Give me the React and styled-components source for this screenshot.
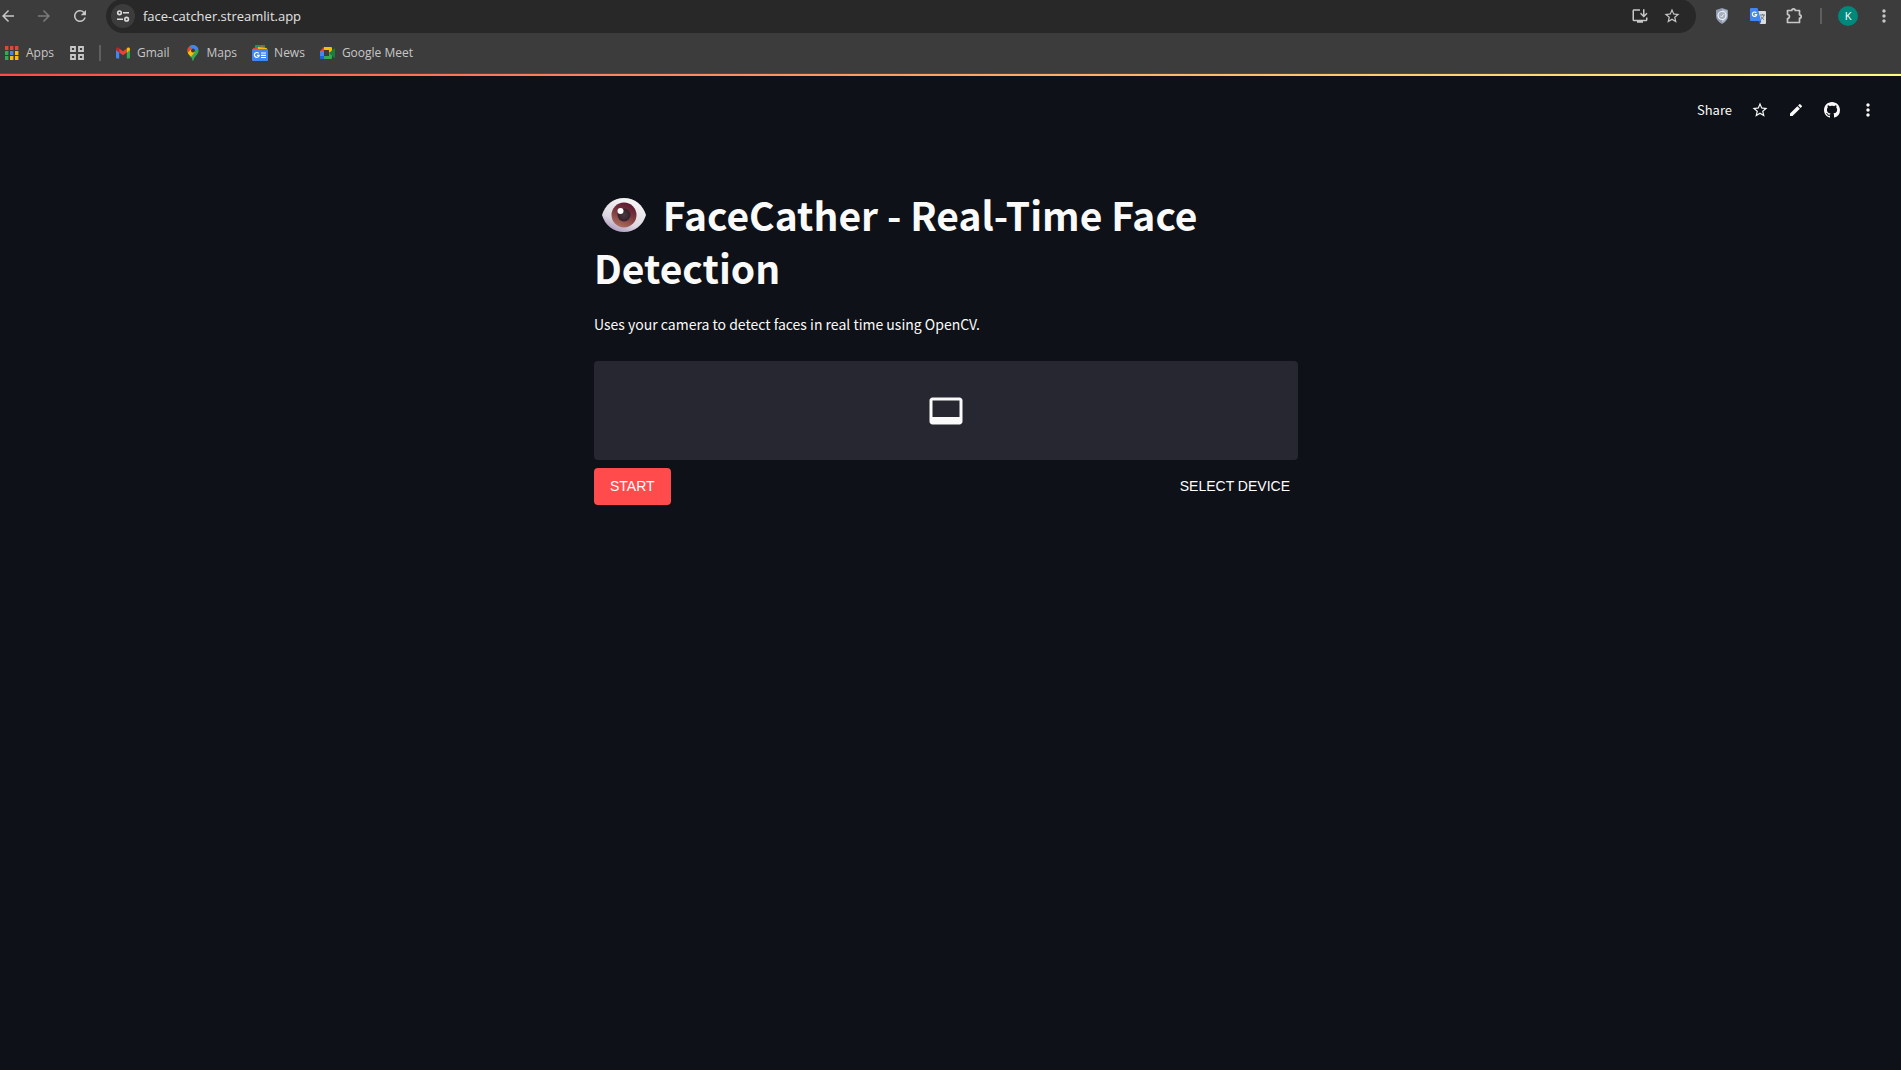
import React from "react";
import styled, { createGlobalStyle } from "styled-components";
import { MdArrowBack, MdArrowForward, MdEdit, MdInstallDesktop, MdMoreVert, MdRefresh, MdStarBorder } from "react-icons/md";

const chromeFont = `"Open Sans", "Noto Sans", sans-serif`;
const appFont = `"Noto Sans CJK JP", "Noto Sans", sans-serif`;
const controlFont = `"Liberation Sans", Arial, sans-serif`;

const GlobalStyle = createGlobalStyle`
  *, *::before, *::after { box-sizing: border-box; }
  body { margin: 0; background: #0e1117; }
  button, input { font: inherit; color: inherit; border: 0; padding: 0; margin: 0; background: none; }
  button { cursor: pointer; }
  svg { display: block; flex: none; }
`;

const Page = styled.div`
  min-height: 100vh;
  display: flex;
  flex-direction: column;
`;

/* Browser frame */

const BrowserBar = styled.div`
  background: #3c3c3c;
  color: #c7c7c7;
  font-family: ${chromeFont};
  border-bottom: 1px solid #4a4a4a;
`;

const Toolbar = styled.div`
  display: flex;
  align-items: center;
  gap: 18px;
  height: 32px;
  padding-right: 9px;
`;

const IconRow = styled.div`
  display: flex;
  align-items: center;
  gap: ${(p) => p.$gap}px;
`;

const IconButton = styled.button`
  width: 16px;
  height: 16px;
  display: flex;
  align-items: center;
  justify-content: center;
  flex: none;
  color: ${(p) => p.$color || "#c7c7c7"};
`;

const AddressBar = styled.div`
  flex: 1;
  min-width: 0;
  height: 34px;
  display: flex;
  align-items: center;
  gap: 8px;
  padding: 0 16px 0 5px;
  background: #282828;
  border-radius: 17px;
`;

const SiteInfo = styled.button`
  width: 24px;
  height: 24px;
  flex: none;
  display: grid;
  place-items: center;
  border-radius: 50%;
  background: #3c3c3c;
`;

const AddressInput = styled.input`
  flex: 1;
  min-width: 0;
  height: 24px;
  font-size: 13px;
  color: #e3e3e3;
  outline: none;
`;

const Divider = styled.span`
  width: 2px;
  height: 16px;
  background: #5f5f5f;
`;

const Avatar = styled.button`
  width: 20px;
  height: 20px;
  border-radius: 50%;
  background: #00897b;
  color: #fff;
  font-size: 11px;
  line-height: 20px;
  text-align: center;
`;

const Bookmarks = styled.nav`
  display: flex;
  align-items: center;
  gap: 14px;
  height: 41px;
  padding: 1px 0 0 4px;
`;

const Bookmark = styled.a`
  display: flex;
  align-items: center;
  gap: 6px;
  font-size: 12px;
  line-height: 16px;
  color: #c7c7c7;
  text-decoration: none;
  white-space: nowrap;
`;

/* App */

const Decoration = styled.div`
  height: 2px;
  background: linear-gradient(90deg, #ff4b4b, #fffd80);
`;

const AppHeader = styled.header`
  height: 68px;
  display: flex;
  align-items: center;
  justify-content: flex-end;
  gap: 20px;
  padding-right: 25px;
  color: #fafafa;
  font-family: ${appFont};
`;

const ShareButton = styled.button`
  font-size: 13px;
  line-height: 20px;
`;

const Main = styled.main`
  width: 100%;
  padding: 44px 25px 0 16px;
  font-family: ${appFont};
  color: #fafafa;
`;

const Column = styled.div`
  max-width: 704px;
  margin: 0 auto;
`;

const Title = styled.h1`
  margin: 0;
  font-size: 39px;
  line-height: 53px;
  font-weight: 700;
`;

const EyeIcon = styled.svg`
  display: inline-block;
  width: 60px;
  height: 36px;
  vertical-align: -2px;
`;

const Intro = styled.p`
  margin: 17px 0 24px;
  font-size: 14px;
  line-height: 26px;
`;

const VideoPanel = styled.div`
  height: 99px;
  display: grid;
  place-items: center;
  border-radius: 4px;
  background: #262730;
`;

const Controls = styled.div`
  display: flex;
  justify-content: space-between;
  margin-top: 8px;
`;

const ControlButton = styled.button`
  height: 37px;
  padding: 0 ${(p) => (p.$primary ? 16 : 8)}px 2px;
  border-radius: 4px;
  background: ${(p) => (p.$primary ? "#ff4b4b" : "transparent")};
  color: #fff;
  font-family: ${controlFont};
  font-size: 14px;
  line-height: 24px;
`;

const Eye = () => (
  <EyeIcon viewBox="0 0 60 36" role="img" aria-label="Eye">
    <defs>
      <linearGradient id="white" x1="0.2" y1="1" x2="0.7" y2="0">
        <stop offset="0" stopColor="#a58dba" />
        <stop offset="0.35" stopColor="#dcd8e0" />
        <stop offset="1" stopColor="#f8f8f8" />
      </linearGradient>
      <linearGradient id="iris" x1="0.7" y1="0" x2="0.3" y2="1">
        <stop offset="0" stopColor="#57162f" />
        <stop offset="0.5" stopColor="#7d3c40" />
        <stop offset="1" stopColor="#b0705e" />
      </linearGradient>
      <radialGradient id="pupil">
        <stop offset="0" stopColor="#4a3a40" />
        <stop offset="1" stopColor="#33202b" />
      </radialGradient>
    </defs>
    <path d="M8 18C11 8 19 1 30 1s19 7 22 17c-3 10-11 17-22 17S11 28 8 18z" fill="url(#white)" />
    <circle cx="30" cy="18" r="12.5" fill="url(#iris)" />
    <circle cx="30" cy="18" r="6.5" fill="url(#pupil)" />
    <circle cx="26.5" cy="14" r="3" fill="#fff" />
  </EyeIcon>
);

const TuneIcon = () => (
  <svg width="14" height="14" viewBox="0 0 14 14" fill="none" stroke="#dcdcdc" strokeWidth="1.6">
    <circle cx="3.5" cy="3.8" r="1.8" />
    <path d="M7 3.8h6M1 10.2h6" />
    <circle cx="10.6" cy="10.2" r="1.8" />
  </svg>
);

const ShieldIcon = () => (
  <svg width="16" height="16" viewBox="0 0 16 16">
    <path d="M8 0l6 2v6c0 3.5-2.5 6-6 8-3.5-2-6-4.5-6-8V2z" fill="#8f9bb0" />
    <path d="M8 1.2l4.9 1.6V8c0 2.9-2 5-4.9 6.7z" fill="#b9c1cf" />
    <circle cx="8" cy="7.5" r="4" fill="#a5afbf" stroke="#eef1f5" strokeWidth="1.2" />
    <path d="M6.5 7.8l1.2 1.2 2-2.8" fill="none" stroke="#eef1f5" />
  </svg>
);

const TranslateIcon = () => (
  <svg width="16" height="16" viewBox="0 0 16 16">
    <path d="M7 3h8a1 1 0 011 1v11a1 1 0 01-1 1H10z" fill="#dcdcdc" />
    <path d="M10 7h5M12.5 6v1M14 7c-.4 2-1.7 3.5-3.2 4.5M11 8.5c.8 1.5 2 2.5 3 3.2" fill="none" stroke="#6b7b80" />
    <path d="M1 0h6.5l3.7 13H1a1 1 0 01-1-1V1a1 1 0 011-1z" fill="#4285f4" />
    <path d="M8 13h3.2L10 16z" fill="#2a56c6" />
    <path d="M6.3 4.9A2.2 2.2 0 106.7 6.6H4.7" fill="none" stroke="#fff" strokeWidth="1.2" />
  </svg>
);

const PuzzleIcon = () => (
  <svg width="18" height="18" viewBox="0 0 18 18">
    <path
      d="M2.5 3.5h4.3a1.7 1.7 0 013.4 0h4.3v4.3a1.7 1.7 0 010 3.4v4.3h-12v-4c2.6 0 2.6-4 0-4z"
      fill="none"
      stroke="#c7c7c7"
      strokeWidth="1.7"
      strokeLinejoin="round"
    />
  </svg>
);

const appColors = ["#ea4335", "#ea4335", "#ea4335", "#34a853", "#4285f4", "#fbbc04", "#34a853", "#fbbc04", "#fbbc04"];

const AppsIcon = () => (
  <svg width="16" height="16" viewBox="0 0 16 16">
    {appColors.map((color, i) => (
      <rect key={i} x={1 + (i % 3) * 5} y={1 + Math.floor(i / 3) * 5} width="3.4" height="4" fill={color} />
    ))}
  </svg>
);

const GridIcon = () => (
  <svg width="16" height="16" viewBox="0 0 16 16" fill="none" stroke="#c7c7c7" strokeWidth="1.8">
    <path d="M2 2h4v4H2zM10 2h4v4h-4zM2 10h4v4H2zM10 10h4v4h-4z" />
  </svg>
);

const GmailIcon = () => (
  <svg width="16" height="16" viewBox="0 0 16 16">
    <path d="M1 4v8.5a1 1 0 001 1h2.2V6.5z" fill="#4285f4" />
    <path d="M15 4v8.5a1 1 0 01-1 1h-2.2V6.5z" fill="#34a853" />
    <path d="M4.2 3.4L8 6.3l3.8-2.9v4L8 10.3 4.2 7.4z" fill="#ea4335" />
    <path d="M1 4.2c0-1.6 1.7-2.2 2.8-1.2l.4.4v4L1 5z" fill="#c5221f" />
    <path d="M15 4.2c0-1.6-1.7-2.2-2.8-1.2l-.4.4v4L15 5z" fill="#fbbc04" />
  </svg>
);

const MapsIcon = () => (
  <svg width="16" height="16" viewBox="0 0 16 16">
    <clipPath id="pin">
      <path d="M8 0a5.6 5.6 0 00-5.6 5.6c0 2.2 1 3.5 2.4 5C6.3 12.4 7 13.5 7.4 15c.2 1.3 1 1.3 1.2 0 .4-1.5 1.1-2.6 2.6-4.4 1.4-1.5 2.4-2.8 2.4-5A5.6 5.6 0 008 0z" />
    </clipPath>
    <g clipPath="url(#pin)">
      <path d="M0 0h16v16H0z" fill="#34a853" />
      <path d="M0 0h4l4 5.6-4 4.5H0z" fill="#ea4335" />
      <path d="M0 10l8-7.5L10 7l-6 7z" fill="#fbbc04" />
      <path d="M4.3 0H16L13 4 8 6z" fill="#4285f4" />
    </g>
    <circle cx="8" cy="5.6" r="2" fill="#3c3c3c" />
  </svg>
);

const NewsIcon = () => (
  <svg width="16" height="16" viewBox="0 0 16 16">
    <path d="M3 0h10v6H3z" fill="#0c9d58" />
    <path d="M1 3l10-2 1 5H1z" fill="#ea4335" />
    <path d="M6 2l9 1-1 4H6z" fill="#fbbc04" />
    <rect y="4" width="16" height="12" rx="1" fill="#4285f4" />
    <path d="M6.7 8.4A2.4 2.4 0 107.2 10.3H4.9M9 8h5M9 10.3h5M9 12.5h5" fill="none" stroke="#fff" strokeWidth="1.2" />
  </svg>
);

const MeetIcon = () => (
  <svg width="16" height="16" viewBox="0 0 16 16">
    <path d="M4 2h7a1 1 0 011 1v4l-3 1V5H4z" fill="#fbbc04" />
    <path d="M4 2v4H0z" fill="#ea4335" />
    <path d="M0 6h4v5H0z" fill="#4285f4" />
    <path d="M0 11h4v3H1a1 1 0 01-1-1z" fill="#1967d2" />
    <path d="M4 11h5V8l3-1v6a1 1 0 01-1 1H4z" fill="#34a853" />
    <path d="M9 8l5-4.6c.5-.4 1-.2 1 .4v8.4c0 .6-.5.8-1 .4z" fill="#188038" />
  </svg>
);

const GithubIcon = () => (
  <svg width="16" height="16" viewBox="0 0 16 16" fill="#fafafa">
    <path d="M8 0C3.58 0 0 3.58 0 8c0 3.54 2.29 6.53 5.47 7.59.4.07.55-.17.55-.38 0-.19-.01-.82-.01-1.49-2.01.37-2.53-.49-2.69-.94-.09-.23-.48-.94-.82-1.13-.28-.15-.68-.52-.01-.53.63-.01 1.08.58 1.23.82.72 1.21 1.87.87 2.33.66.07-.52.28-.87.51-1.07-1.78-.2-3.64-.89-3.64-3.95 0-.87.31-1.59.82-2.15-.08-.2-.36-1.02.08-2.12 0 0 .67-.21 2.2.82.64-.18 1.32-.27 2-.27s1.36.09 2 .27c1.53-1.04 2.2-.82 2.2-.82.44 1.1.16 1.92.08 2.12.51.56.82 1.27.82 2.15 0 3.07-1.87 3.75-3.65 3.95.29.25.54.73.54 1.48 0 1.07-.01 1.93-.01 2.2 0 .21.15.46.55.38A8.01 8.01 0 0016 8c0-4.42-3.58-8-8-8z" />
  </svg>
);

const VideoLabelIcon = () => (
  <svg width="36" height="36" viewBox="0 0 24 24" fill="#fafafa" aria-hidden="true">
    <path d="M21 3H3c-1.1 0-2 .9-2 2v14c0 1.1.9 2 2 2h18c1.1 0 2-.9 2-2V5c0-1.1-.9-2-2-2zm0 13H3V5h18v11z" />
  </svg>
);

const bookmarks = [
  { label: "Gmail", Icon: GmailIcon },
  { label: "Maps", Icon: MapsIcon },
  { label: "News", Icon: NewsIcon },
  { label: "Google Meet", Icon: MeetIcon },
];

function BrowserFrame() {
  return (
    <BrowserBar>
      <Toolbar>
        <IconRow $gap={20}>
          <IconButton aria-label="Back"><MdArrowBack size={18} /></IconButton>
          <IconButton aria-label="Forward" $color="#7b7b7b"><MdArrowForward size={18} /></IconButton>
          <IconButton aria-label="Reload"><MdRefresh size={18} /></IconButton>
        </IconRow>
        <AddressBar>
          <SiteInfo aria-label="Site information"><TuneIcon /></SiteInfo>
          <AddressInput aria-label="Address" defaultValue="face-catcher.streamlit.app" />
          <IconRow $gap={16}>
            <IconButton aria-label="Install app"><MdInstallDesktop size={18} /></IconButton>
            <IconButton aria-label="Bookmark this tab"><MdStarBorder size={18} /></IconButton>
          </IconRow>
        </AddressBar>
        <IconRow $gap={20}>
          <IconButton aria-label="Shield"><ShieldIcon /></IconButton>
          <IconButton aria-label="Translate"><TranslateIcon /></IconButton>
          <IconButton aria-label="Extensions"><PuzzleIcon /></IconButton>
        </IconRow>
        <IconRow $gap={16}>
          <Divider />
          <Avatar>K</Avatar>
        </IconRow>
        <IconButton aria-label="Browser menu"><MdMoreVert size={20} /></IconButton>
      </Toolbar>
      <Bookmarks aria-label="Bookmarks">
        <IconRow $gap={15}>
          <Bookmark href="#apps"><AppsIcon />Apps</Bookmark>
          <IconButton aria-label="Tab groups"><GridIcon /></IconButton>
        </IconRow>
        <Divider />
        <IconRow $gap={15}>
          {bookmarks.map(({ label, Icon }) => (
            <Bookmark key={label} href={`#${label}`}><Icon />{label}</Bookmark>
          ))}
        </IconRow>
      </Bookmarks>
    </BrowserBar>
  );
}

export default function App() {
  return (
    <Page>
      <GlobalStyle />
      <BrowserFrame />
      <Decoration />
      <AppHeader>
        <ShareButton>Share</ShareButton>
        <IconButton aria-label="Favorite" $color="#fafafa"><MdStarBorder size={18} /></IconButton>
        <IconButton aria-label="Edit" $color="#fafafa"><MdEdit size={16} /></IconButton>
        <IconButton aria-label="View on GitHub"><GithubIcon /></IconButton>
        <IconButton aria-label="App menu" $color="#fafafa"><MdMoreVert size={20} /></IconButton>
      </AppHeader>
      <Main>
        <Column>
          <Title><Eye /> FaceCather - Real-Time Face Detection</Title>
          <Intro>Uses your camera to detect faces in real time using OpenCV.</Intro>
          <VideoPanel><VideoLabelIcon /></VideoPanel>
          <Controls>
            <ControlButton $primary>START</ControlButton>
            <ControlButton>SELECT DEVICE</ControlButton>
          </Controls>
        </Column>
      </Main>
    </Page>
  );
}
